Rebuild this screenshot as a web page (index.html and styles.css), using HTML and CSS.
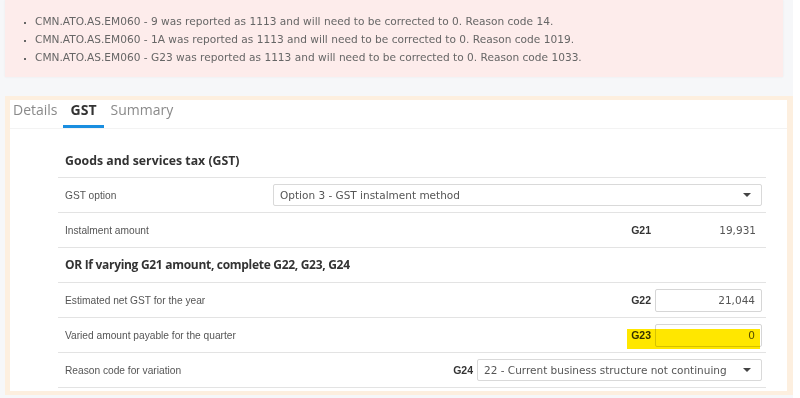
FILE: index.html
```html
<!DOCTYPE html>
<html lang="en">
<head>
    <meta charset="UTF-8">
    <meta name="viewport" content="width=device-width, initial-scale=1.0">
    <title>GST</title>
    <link rel="stylesheet" href="styles.css">
</head>
<body>
    <div class="page">
        <div class="alert">
            <ul>
                <li>CMN.ATO.AS.EM060 - 9 was reported as 1113 and will need to be corrected to 0. Reason code 14.</li>
                <li>CMN.ATO.AS.EM060 - 1A was reported as 1113 and will need to be corrected to 0. Reason code 1019.</li>
                <li>CMN.ATO.AS.EM060 - G23 was reported as 1113 and will need to be corrected to 0. Reason code 1033.</li>
            </ul>
        </div>

        <div class="panel">
            <div class="tabs">
                <span class="tab">Details</span>
                <span class="tab active">GST</span>
                <span class="tab">Summary</span>
            </div>

            <div class="section">
                <h2 class="heading">Goods and services tax (GST)</h2>

                <div class="row">
                    <span class="label">GST option</span>
                    <div class="select wide">
                        <span>Option 3 - GST instalment method</span>
                        <span class="caret"></span>
                    </div>
                </div>
                <div class="row">
                    <span class="label">Instalment amount</span>
                    <div class="field">
                        <span class="code">G21</span>
                        <span class="value">19,931</span>
                    </div>
                </div>
                <div class="row">
                    <h2 class="heading sub">OR If varying G21 amount, complete G22, G23, G24</h2>
                </div>
                <div class="row">
                    <span class="label">Estimated net GST for the year</span>
                    <div class="field">
                        <span class="code">G22</span>
                        <input class="value input" type="text" value="21,044">
                    </div>
                </div>
                <div class="row">
                    <span class="label">Varied amount payable for the quarter</span>
                    <div class="field">
                        <span class="code">G23</span>
                        <input class="value input" type="text" value="0">
                        <span class="highlight"></span>
                    </div>
                </div>
                <div class="row">
                    <span class="label">Reason code for variation</span>
                    <div class="field">
                        <span class="code">G24</span>
                        <div class="select reason">
                            <span>22 - Current business structure not continuing</span>
                            <span class="caret"></span>
                        </div>
                    </div>
                </div>
            </div>
        </div>
    </div>
</body>
</html>
```

FILE: styles.css
```css
body {
    margin: 0;
    background-color: #ffffff;
    font-family: "DejaVu Sans", Verdana, sans-serif;
}
.page {
    width: 793px;
    height: 398px;
    background-color: #f6f7f9; /* light gray page */
}
.alert {
    margin: 0 10px 19px 5px;
    height: 77px;
    box-sizing: border-box;
    padding-top: 12px;
    background-color: #fdeceb; /* soft pink */
    box-shadow: 0 0 2px rgba(0, 0, 0, 0.06);
}
.alert ul {
    margin: 0;
    padding-left: 30px;
    list-style: square;
}
.alert li {
    font-size: 10.6px;
    line-height: 18px;
    color: #666;
}
.alert li::marker {
    font-size: 8px;
}
.panel {
    margin-left: 5px;
    border: 5px solid #fdefdf; /* peach frame */
    border-top-width: 4px;
    border-bottom-width: 4px;
    border-right-width: 6px;
    padding-bottom: 3px;
    background-color: #ffffff;
}
.tabs {
    display: flex;
    height: 28px;
    padding-left: 3px;
    border-bottom: 1px solid #f3f3f3;
    font-family: "Open Sans", sans-serif;
    font-size: 14px;
}
.tab {
    padding: 0 7px;
    line-height: 20px;
    color: #8a8a8a;
    border-bottom: 3px solid transparent;
    height: 25px;
}
.tab:first-child {
    padding: 0;
    margin-right: 5px;
}
.tab.active {
    padding-left: 8px;
    color: #333;
    font-weight: bold;
    border-bottom-color: #1a8ee0; /* blue underline */
}
.section {
    margin: 0 21px 0 48px;
    padding-top: 21px;
}
.heading {
    margin: 0;
    font-family: "Open Sans", sans-serif;
    font-size: 12.3px;
    font-weight: bold;
    color: #333;
    line-height: 22px;
    padding: 0 0 5px 7px;
    border-bottom: 1px solid #e3e3e3;
}
.row .heading {
    padding: 0;
    border: none;
}
.heading.sub {
    font-size: 12px;
    letter-spacing: -0.3px;
}
.row {
    display: flex;
    align-items: center;
    justify-content: space-between;
    height: 34px;
    padding: 0 4px 0 7px;
    border-bottom: 1px solid #e3e3e3;
}
.label {
    font-family: "Liberation Sans", Arial, sans-serif;
    font-size: 10.2px;
    color: #555;
}
.select {
    display: flex;
    align-items: center;
    justify-content: space-between;
    height: 22px;
    box-sizing: border-box;
    padding: 0 10px 0 6px;
    border: 1px solid #d9d9d9;
    border-radius: 2px;
    font-size: 10.5px;
    color: #555;
    background-color: #fff;
}
.select.wide {
    width: 489px;
}
.select.reason {
    width: 285px;
}
.caret {
    width: 0;
    height: 0;
    border-left: 4px solid transparent;
    border-right: 4px solid transparent;
    border-top: 4px solid #444;
}
.field {
    position: relative;
    display: flex;
    align-items: center;
    gap: 4px;
}
.code {
    font-family: "Liberation Sans", Arial, sans-serif;
    font-size: 10.5px;
    font-weight: bold;
    color: #333;
}
.value {
    width: 107px;
    box-sizing: border-box;
    padding-right: 6px;
    text-align: right;
    font-family: "DejaVu Sans", Verdana, sans-serif;
    font-size: 10.5px;
    color: #555;
}
.input {
    height: 23px;
    margin: 0;
    border: 1px solid #d6d6d6;
    border-radius: 2px;
    outline: none;
    background-color: #fff;
}
.highlight {
    position: absolute;
    left: -4px;
    right: 2px;
    top: 5px;
    bottom: -2px;
    background-color: #ffe700; /* marker highlight */
    mix-blend-mode: multiply;
}
```
